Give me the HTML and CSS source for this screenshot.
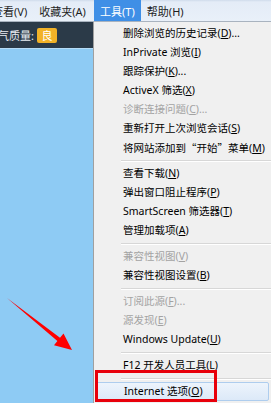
FILE: index.html
```html
<!DOCTYPE html>
<html lang="zh-CN">
<head>
  <meta charset="UTF-8">
  <meta name="viewport" content="width=device-width, initial-scale=1.0">
  <title>工具菜单</title>
  <link rel="stylesheet" href="styles.css">
</head>
<body>
  <div class="menubar">
    <span class="bar-item first">查看(V)</span>
    <span class="bar-item">收藏夹(A)</span>
    <span class="bar-item active">工具(T)</span>
    <span class="bar-item">帮助(H)</span>
  </div>

  <div class="main">
    <div class="page">
      <div class="air-bar">
        <span class="air-label">空气质量:</span>
        <span class="badge">良</span>
      </div>
      <div class="page-body"></div>
    </div>

    <div class="dropdown">
      <div class="item">删除浏览的历史记录(<u>D</u>)...</div>
      <div class="item">InPrivate 浏览(<u>I</u>)</div>
      <div class="item">跟踪保护(<u>K</u>)...</div>
      <div class="item">ActiveX 筛选(<u>X</u>)</div>
      <div class="item disabled">诊断连接问题(<u>C</u>)...</div>
      <div class="item">重新打开上次浏览会话(<u>S</u>)</div>
      <div class="item">将网站添加到<span class="cjk">“开始”</span>菜单(<u>M</u>)</div>
      <div class="sep"></div>
      <div class="item">查看下载(<u>N</u>)</div>
      <div class="item">弹出窗口阻止程序(<u>P</u>)</div>
      <div class="item">SmartScreen 筛选器(<u>T</u>)</div>
      <div class="item">管理加载项(<u>A</u>)</div>
      <div class="sep"></div>
      <div class="item disabled">兼容性视图(<u>V</u>)</div>
      <div class="item">兼容性视图设置(<u>B</u>)</div>
      <div class="sep"></div>
      <div class="item disabled">订阅此源(<u>F</u>)...</div>
      <div class="item disabled">源发现(<u>E</u>)</div>
      <div class="item">Windows Update(<u>U</u>)</div>
      <div class="sep"></div>
      <div class="item">F12 开发人员工具(<u>L</u>)</div>
      <div class="sep"></div>
      <div class="item hover">Internet 选项(<u>O</u>)</div>
    </div>
  </div>

  <!-- 标注：红色箭头和红框 -->
  <svg class="arrow" width="271" height="403" viewBox="0 0 271 403">
    <polygon points="7,298 60,337.8 63.5,333.5 72,350 54,345.3 57.4,341" fill="#ff0000"/>
  </svg>
  <div class="mark-box"></div>
</body>
</html>
```

FILE: styles.css
```css
* {
  margin: 0;
  padding: 0;
  box-sizing: border-box;
}

body {
  width: 271px;
  height: 403px;
  overflow: hidden;
  position: relative;
  font-family: "Noto Sans", "Noto Sans CJK SC", sans-serif;
  font-size: 11px;
  color: #000;
  background: #f0f0f0;
}

.menubar {
  height: 22px;
  display: flex;
  align-items: stretch;
  background: linear-gradient(#cfdbeb 0, #e4ecf7 2px, #e9f0f9 100%);
  border-bottom: 1px solid #a9b3bf;
  white-space: nowrap;
}

.bar-item {
  display: flex;
  align-items: center;
  padding: 0 6px;
  color: #1e1e1e;
}

.bar-item.first {
  margin-left: -14px;
  padding-right: 6px;
}

.bar-item.active {
  background: #3f8fe6;
  color: #fff;
  width: 47px;
  justify-content: center;
  margin-left: 2px;
}

.main {
  display: flex;
  height: 381px;
}

.page {
  width: 93px;
  display: flex;
  flex-direction: column;
}

.air-bar {
  height: 26px;
  background: #2b3a48;
  display: flex;
  align-items: center;
  gap: 3px;
  overflow: hidden;
  white-space: nowrap;
}

.air-label {
  color: #e8edf2;
  margin-left: -13px;
}

.badge {
  background: #f2b227;
  color: #fff;
  width: 20px;
  height: 15px;
  display: flex;
  align-items: center;
  justify-content: center;
  border-radius: 2px;
  font-size: 11px;
}

.page-body {
  flex: 1;
  background: #8ecbf4;
  border-top: 1px solid #b5dcf7;
}

.dropdown {
  flex: 1;
  background: #f0f0f0;
  border-left: 1px solid #a0a0a0;
  padding-top: 2px;
  padding-left: 2px;
  white-space: nowrap;
  font-size: 10.5px;
}

.item {
  height: 19px;
  line-height: 19px;
  padding-left: 27px;
  color: #000;
}

.item u {
  text-decoration: underline;
}

.cjk {
  font-family: "Noto Sans CJK SC", sans-serif;
}

.item.disabled {
  color: #a3a3a3;
}

.item.hover {
  background: linear-gradient(#edf4fc, #dce9f8);
  border: 1px solid #aecdee;
  border-radius: 2px;
  line-height: 17px;
  margin-right: 2px;
}

.sep {
  height: 7px;
  margin-left: 25px;
  border-top: 3px solid transparent;
}

.sep::after {
  content: "";
  display: block;
  height: 1px;
  background: #d7d7d7;
  border-bottom: 1px solid #fff;
  box-sizing: content-box;
}

.arrow {
  position: absolute;
  left: 0;
  top: 0;
  pointer-events: none;
}

.mark-box {
  position: absolute;
  left: 95px;
  top: 370px;
  width: 122px;
  height: 32px;
  border: 3px solid #e8000b;
}
```
